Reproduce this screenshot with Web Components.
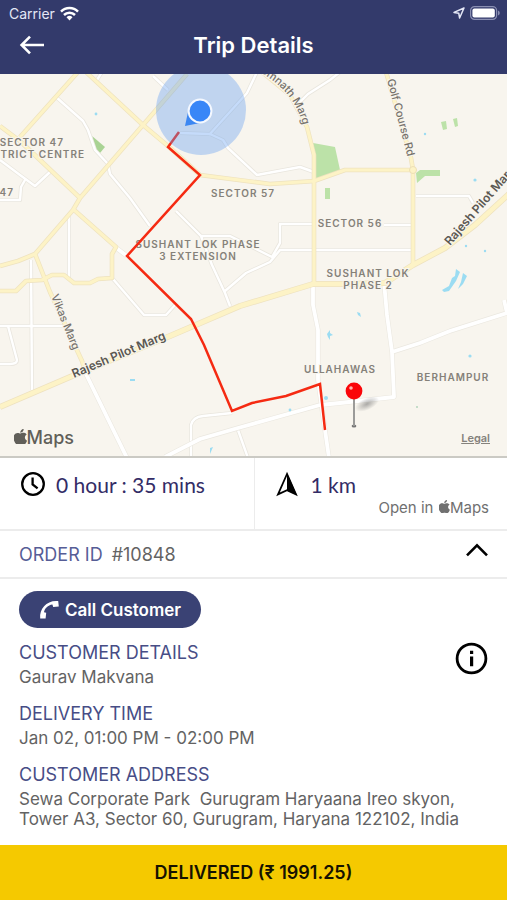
<!DOCTYPE html>
<html lang="en">
<head>
<meta charset="UTF-8">
<meta name="viewport" content="width=device-width, initial-scale=1">
<title>Trip Details</title>
<style>
    :root {
        --color-primary: #333a6b;
        --color-button: #3a4274;
        --color-heading: #474d86;
        --color-value: #332c66;
        --color-text: #636363;
        --color-line: #ececec;
        --color-accent: #f5c900;
        --gutter: 19px;
        --font-size-sm: 15px;
        --font-size-md: 17px;
        --font-size-lg: 18px;
        --font-size-xl: 22px;
        --font-display: Lato, "Open Sans", sans-serif;
    }

    body {
        margin: 0;
        background: #fff;
        color: var(--color-text);
        font-family: Inter, "Liberation Sans", sans-serif;
        font-size: var(--font-size-md);
    }
</style>
</head>
<body>
<trip-page>
    <status-bar slot="header">Carrier</status-bar>
    <nav-bar slot="header">Trip Details</nav-bar>
    <trip-map></trip-map>
    <trip-summary>
        <span slot="time">0 hour : 35 mins</span>
        <span slot="distance">1 km</span>
    </trip-summary>
    <order-row>#10848</order-row>
    <customer-panel>
        <detail-item label="CUSTOMER DETAILS">Gaurav Makvana</detail-item>
        <detail-item label="DELIVERY TIME">Jan 02, 01:00 PM - 02:00 PM</detail-item>
        <detail-item label="CUSTOMER ADDRESS">Sewa Corporate Park&nbsp; Gurugram Haryaana Ireo skyon, Tower A3, Sector 60, Gurugram, Haryana 122102, India</detail-item>
    </customer-panel>
    <deliver-button slot="footer">DELIVERED (₹ 1991.25)</deliver-button>
</trip-page>

<script>
class TripPage extends HTMLElement {
    connectedCallback() {
        const shadow = this.attachShadow({ mode: "open" });
        shadow.innerHTML = `
            <style>
                :host {
                    display: flex;
                    flex-direction: column;
                    min-height: 100vh;
                }

                header {
                    background: var(--color-primary);
                    color: #fff;
                }

                main {
                    display: flex;
                    flex-direction: column;
                    flex: 1;
                }
            </style>

            <header><slot name="header"></slot></header>
            <main><slot></slot></main>
            <footer><slot name="footer"></slot></footer>
        `;
    }
}

class StatusBar extends HTMLElement {
    connectedCallback() {
        const shadow = this.attachShadow({ mode: "open" });
        shadow.innerHTML = `
            <style>
                :host {
                    display: flex;
                    align-items: center;
                    justify-content: space-between;
                    height: 26px;
                    padding: 0 7px 0 9px;
                    font-size: 14px;
                    color: #e4e7f6;
                }

                .group {
                    display: flex;
                    align-items: center;
                    gap: 5px;
                }

                svg {
                    display: block;
                }
            </style>

            <div class="group">
                <span><slot></slot></span>
                <svg width="19" height="15" viewBox="0 0 19 15" fill="none" stroke="#fff" stroke-width="2.5">
                    <path d="M1 5.6a12 12 0 0 1 17 0"/>
                    <path d="M4 9a7.8 7.8 0 0 1 11 0"/>
                    <path d="M9.5 14.4 6.5 11.2a4.3 4.3 0 0 1 6 0z" fill="#fff" stroke="none"/>
                </svg>
            </div>
            <div class="group">
                <svg width="12" height="12" viewBox="0 0 12 12" fill="none" stroke="#e4e7f6" stroke-width="1.5" stroke-linejoin="round">
                    <path d="M11 1 1 5.4l4.8.9.8 4.7z"/>
                </svg>
                <svg width="30" height="14" viewBox="0 0 30 14">
                    <rect x=".6" y=".6" width="26" height="12.8" rx="4" fill="none" stroke="#8a8fb2" stroke-width="1.2"/>
                    <rect x="2.4" y="2.4" width="22.4" height="9.2" rx="2" fill="#fff"/>
                    <path d="M28 4.6q1.8.8 1.8 2.4T28 9.4z" fill="#8a8fb2"/>
                </svg>
            </div>
        `;
    }
}

class NavBar extends HTMLElement {
    connectedCallback() {
        const shadow = this.attachShadow({ mode: "open" });
        shadow.innerHTML = `
            <style>
                :host {
                    display: grid;
                    grid-template-columns: 48px 1fr 48px;
                    align-items: center;
                    height: 48px;
                }

                button {
                    display: flex;
                    align-items: center;
                    height: 38px;
                    margin-bottom: 10px;
                    padding: 0 0 0 19px;
                    border: 0;
                    background: none;
                    cursor: pointer;
                }

                h1 {
                    margin: 0 0 10px;
                    font-size: var(--font-size-xl);
                    line-height: 38px;
                    font-weight: 600;
                    text-align: center;
                }
            </style>

            <button type="button" aria-label="Back">
                <svg width="26" height="20" viewBox="0 0 26 20" fill="none" stroke="#fff" stroke-width="2.6">
                    <path d="M25 10H3M11 1.6 2.6 10l8.4 8.4"/>
                </svg>
            </button>
            <h1><slot></slot></h1>
        `;
    }
}

class AppleMark extends HTMLElement {
    connectedCallback() {
        const shadow = this.attachShadow({ mode: "open" });
        shadow.innerHTML = `
            <style>
                :host {
                    display: inline-flex;
                    align-items: baseline;
                }

                svg {
                    flex: none;
                    width: 0.7em;
                    height: 0.85em;
                }
            </style>

            <svg viewBox="3 0 18 23" preserveAspectRatio="none" fill="currentColor" aria-label="Apple">
                <path d="M12.152 6.896c-.948 0-2.415-1.078-3.96-1.04-2.04.027-3.91 1.183-4.961 3.014-2.117 3.675-.546 9.103 1.519 12.09 1.013 1.454 2.208 3.09 3.792 3.039 1.52-.065 2.09-.987 3.935-.987 1.831 0 2.35.987 3.96.948 1.637-.026 2.676-1.48 3.676-2.948 1.156-1.688 1.636-3.325 1.662-3.415-.039-.013-3.182-1.221-3.22-4.857-.026-3.04 2.48-4.494 2.597-4.559-1.429-2.09-3.623-2.324-4.39-2.376-2-.156-3.675 1.09-4.61 1.09zM15.53 3.83c.843-1.012 1.4-2.427 1.245-3.83-1.207.052-2.662.805-3.532 1.818-.78.896-1.454 2.338-1.273 3.714 1.338.104 2.715-.688 3.559-1.701"/>
            </svg>
            <span>Maps</span>
        `;
    }
}

const MINOR_ROADS = `
    M56 97 83 121 88 130 95 150 108 164 110 174 130 198 150 226
    M176 211 201 236 212 265 225 293 230 306
    M201 236H230L272 257 280 243V224H314
    M225 291 246 273 270 262 280 250H413
    M384 225H412
    M416 196H469L473 203
    M257 72 247 93 209 135
    M180 133 210 134 223 140 228 148 257 175 300 167 314 172
    M300 102 308 94 330 80 340 72
    M0 160 20 175 35 186 50 172
    M0 200H20L21 187 25 180
    M69 213V280
    M31 260 32 390
    M0 326H65
    M8 326 17 360Q17 364 10 364H0
    M97 80 102 72
    M153 76 168 90
    M113 279 144 315H166L175 305
    M191 458V425Q193 417 203 416L232 413
    M238 430 248 458`;

const WHITE_ROADS = `
    M115 247 127 256
    M86 374 127 458
    M313 284V305L318 330V380L325 430 329 458
    M384 282 387 315 392 352 394 397 340 403 320 405 238 428 200 439 165 457
    M392 352 420 343 450 331 507 313 504 300`;

const YELLOW_ROADS = `
    M78 72 20 137
    M0 126 20 141 79 197
    M73 209 116 247 112 254V278L98 279 90 283H74L64 275H52L42 280 26 281 16 291H0
    M86 72 143 125 168 146 200 175 270 184 315 181
    M187 74 143 125 80 198 73 210 35 254 18 261 0 266
    M35 254 50 292 82 361 86 374
    M262 72 290 95 307 127 314 155V284
    M314 181 345 170H412
    M386 72 411 158 413 170V264`;

const MAIN_ROADS = `
    M0 407 70 377 170 336 240 306 313 284 345 284 385 283 413 265 445 248 475 225 510 193`;

class TripMap extends HTMLElement {
    connectedCallback() {
        const shadow = this.attachShadow({ mode: "open" });
        shadow.innerHTML = `
            <style>
                :host {
                    display: flex;
                    flex: 1;
                    position: relative;
                    background: #f8f5ee;
                    border-bottom: 2px solid #cbcac4;
                }

                .map {
                    display: block;
                    width: 100%;
                    flex: 1;
                }

                .road {
                    fill: none;
                    stroke-linejoin: round;
                }

                .area {
                    font-size: 10px;
                    font-weight: 600;
                    letter-spacing: 1px;
                    text-anchor: middle;
                    fill: #858179;
                    stroke: #f8f5ee;
                    stroke-width: 2px;
                    paint-order: stroke;
                }

                .area__edge {
                    text-anchor: end;
                }

                .street {
                    font-size: 11px;
                    font-weight: 500;
                    fill: #77736c;
                    stroke: #f8f5ee;
                    stroke-width: 2px;
                    paint-order: stroke;
                }

                .street--main {
                    font-size: 12px;
                    font-weight: 600;
                    fill: #5b5852;
                }

                .brand {
                    position: absolute;
                    left: 14px;
                    bottom: 8px;
                    font-size: var(--font-size-lg);
                    font-weight: 500;
                    color: #615f59;
                }

                .legal {
                    position: absolute;
                    right: 17px;
                    bottom: 11px;
                    font-size: 11px;
                    font-weight: 600;
                    color: #85827c;
                }
            </style>

            <svg class="map" viewBox="0 74 507 382" preserveAspectRatio="xMidYMid slice" role="img" aria-label="Route map">
                <defs>
                    <path id="somnath" d="M254 69Q298 91 304 132"/>
                    <radialGradient id="shade">
                        <stop offset="0" stop-color="#777" stop-opacity=".6"/>
                        <stop offset="1" stop-color="#777" stop-opacity="0"/>
                    </radialGradient>
                </defs>

                <!-- parks -->
                <g fill="#bce2a8">
                    <path d="M313 143 335 147 340 170 316 179z"/>
                    <path d="M92 136 105 147 100 153 96 150z" fill="#a9d394"/>
                    <path d="M325 188h5v11h-5z"/>
                    <path d="M416 173 420 170H440V176H425L417 183z"/>
                    <path d="M441 122 446 121 447 129 443 130zM453 119 457 118 458 126 455 127z"/>
                </g>

                <!-- roads -->
                <path class="road" stroke="#e9e6de" stroke-width="4" d="${MINOR_ROADS}"/>
                <path class="road" stroke="#fff" stroke-width="2.4" d="${MINOR_ROADS}"/>
                <path class="road" stroke="#ebe8e0" stroke-width="5" d="${WHITE_ROADS}"/>
                <path class="road" stroke="#fff" stroke-width="3.8" d="${WHITE_ROADS}"/>
                <path class="road" stroke="#eee2bf" stroke-width="4.6" d="${YELLOW_ROADS}"/>
                <path class="road" stroke="#eee2bf" stroke-width="6" d="${MAIN_ROADS}"/>
                <path class="road" stroke="#fdf3c6" stroke-width="3.2" d="${YELLOW_ROADS}"/>
                <path class="road" stroke="#fdf3c6" stroke-width="4.6" d="${MAIN_ROADS}"/>
                <circle cx="413" cy="170" r="3.5" fill="#fdf3c6" stroke="#eddfb5"/>

                <!-- water -->
                <g fill="#9bdcf2">
                    <path d="M456 269 460 272 456 281 449 291 444 292 442 290 449 286 452 278 455 276zM463 273 467 276 463 284 458 289 461 282z"/>
                    <path d="M327 334 330 330 330 333 333 335 330 336 330 340 328 337z"/>
                    <path d="M357 312 360 313 361 317 358 315zM210 448 213 447 210 454zM130 379h5v2h-5z"/>
                    <circle cx="96" cy="114" r="1.4"/>
                    <circle cx="425" cy="134" r="1.2"/>
                    <circle cx="475" cy="180" r="1.6"/>
                    <circle cx="466" cy="246" r="1.2"/>
                    <circle cx="485" cy="251" r="1.2"/>
                    <circle cx="470" cy="356" r="1.6"/>
                    <circle cx="326" cy="398" r="2"/>
                    <circle cx="290" cy="410" r="1.4"/>
                    <circle cx="417" cy="407" r="1" fill="#b5d5bd"/>
                </g>

                <g class="area">
                    <text class="area__edge" x="64" y="146">SECTOR 47</text>
                    <text class="area__edge" x="85" y="158">DISTRICT CENTRE</text>
                    <text class="area__edge" x="14" y="196">SECTOR 47</text>
                    <text x="243" y="197">SECTOR 57</text>
                    <text x="350" y="227">SECTOR 56</text>
                    <text x="198" y="248">SUSHANT LOK PHASE</text>
                    <text x="198" y="260">3 EXTENSION</text>
                    <text x="368" y="277">SUSHANT LOK</text>
                    <text x="368" y="289">PHASE 2</text>
                    <text x="340" y="373">ULLAHAWAS</text>
                    <text x="453" y="381">BERHAMPUR</text>
                </g>
                <g class="street">
                    <text><textPath href="#somnath">Somnath Marg</textPath></text>
                    <text transform="translate(387 80) rotate(75)">Golf Course Rd</text>
                    <text transform="translate(51 296) rotate(68)">Vikas Marg</text>
                    <text class="street--main" transform="translate(74 378) rotate(-23)">Rajesh Pilot Marg</text>
                    <text class="street--main" transform="translate(450 246) rotate(-49)">Rajesh Pilot Marg</text>
                </g>

                <!-- route -->
                <path d="M179 132 168 147 200 175 127 256 191 319 204 345 232 411 252 403 286 396 320 384 325 430" fill="none" stroke="#f52a12" stroke-width="2.5"/>

                <!-- current position -->
                <circle cx="201" cy="110" r="45" fill="#5e9cf0" fill-opacity=".36"/>
                <path d="M185 126 188 112 200 123z" fill="#3c87f2"/>
                <circle cx="200" cy="111" r="11.4" fill="#3886f7" stroke="#f4f8ff" stroke-width="2"/>

                <!-- destination -->
                <ellipse cx="367" cy="404" rx="13" ry="6" fill="url(#shade)" transform="rotate(-25 367 404)"/>
                <ellipse cx="354" cy="426" rx="2.4" ry="1.6" fill="#777"/>
                <path d="M354 398V426" stroke="#9b9b99" stroke-width="2"/>
                <circle cx="354" cy="391" r="8.4" fill="#fa0509"/>
                <circle cx="351" cy="388" r="1.8" fill="#ffb5b0"/>
            </svg>
            <apple-mark class="brand"></apple-mark>
            <a class="legal" href="#legal">Legal</a>
        `;
    }
}

class TripSummary extends HTMLElement {
    connectedCallback() {
        const shadow = this.attachShadow({ mode: "open" });
        shadow.innerHTML = `
            <style>
                :host {
                    display: grid;
                    grid-template-columns: 1fr 1fr;
                    border-bottom: 2px solid var(--color-line);
                }

                .cell {
                    padding: 12px 18px 11px var(--gutter);
                }

                .cell + .cell {
                    border-left: 1px solid var(--color-line);
                }

                .value {
                    display: flex;
                    align-items: center;
                    gap: 10px;
                    height: 28px;
                    font-family: var(--font-display);
                    font-size: 21px;
                    color: var(--color-value);
                }

                a {
                    display: flex;
                    justify-content: flex-end;
                    gap: 6px;
                    font-size: var(--font-size-sm);
                    line-height: 20px;
                    color: #707070;
                    text-decoration: none;
                }
            </style>

            <div class="cell">
                <div class="value">
                    <svg width="27" height="27" viewBox="0 0 27 27" fill="none" stroke="#000" stroke-width="2.3">
                        <circle cx="14" cy="13" r="10.8"/>
                        <path d="M13.6 6.4V13.4L18.6 17.4"/>
                    </svg>
                    <slot name="time"></slot>
                </div>
            </div>
            <div class="cell">
                <div class="value">
                    <svg width="27" height="27" viewBox="0 0 27 27">
                        <path d="M13 3 4 23.4 13 19.2 22 23.4z" fill="none" stroke="#000" stroke-width="1.8"/>
                        <path d="M13 2 22.8 24 13 19.6z"/>
                    </svg>
                    <slot name="distance"></slot>
                </div>
                <a href="#maps">Open in <apple-mark></apple-mark></a>
            </div>
        `;
    }
}

class OrderRow extends HTMLElement {
    connectedCallback() {
        const shadow = this.attachShadow({ mode: "open" });
        shadow.innerHTML = `
            <style>
                :host {
                    display: flex;
                    align-items: center;
                    justify-content: space-between;
                    height: 46px;
                    padding: 0 var(--gutter);
                    border-bottom: 2px solid var(--color-line);
                    font-size: var(--font-size-lg);
                }

                .order {
                    display: flex;
                    gap: 9px;
                }

                .label {
                    color: #565d96;
                }

                button {
                    display: flex;
                    padding: 0 0 8px;
                    border: 0;
                    background: none;
                    cursor: pointer;
                }
            </style>

            <div class="order">
                <span class="label">ORDER ID</span>
                <span><slot></slot></span>
            </div>
            <button type="button" aria-label="Collapse order" aria-expanded="true">
                <svg width="22" height="14" viewBox="0 0 22 14" fill="none" stroke="#000" stroke-width="2.6">
                    <path d="M1 12.4 11 2.4l10 10"/>
                </svg>
            </button>
        `;
    }
}

class DetailItem extends HTMLElement {
    connectedCallback() {
        const shadow = this.attachShadow({ mode: "open" });
        shadow.innerHTML = `
            <style>
                :host {
                    display: block;
                }

                h2 {
                    margin: 0 0 3px;
                    font-size: var(--font-size-lg);
                    line-height: 22px;
                    font-weight: 400;
                    color: var(--color-heading);
                }

                p {
                    margin: 0;
                    line-height: 20px;
                }
            </style>

            <h2>${this.getAttribute("label")}</h2>
            <p><slot></slot></p>
        `;
    }
}

class CustomerPanel extends HTMLElement {
    connectedCallback() {
        const shadow = this.attachShadow({ mode: "open" });
        shadow.innerHTML = `
            <style>
                :host {
                    display: flex;
                    align-items: flex-start;
                    justify-content: space-between;
                    padding: 12px var(--gutter) 16px;
                }

                .details {
                    display: flex;
                    flex-direction: column;
                    align-items: flex-start;
                    gap: 16px;
                }

                .call {
                    display: flex;
                    align-items: center;
                    gap: 5px;
                    height: 37px;
                    padding: 0 20px;
                    margin-bottom: -2px;
                    border: 0;
                    border-radius: 19px;
                    background: var(--color-button);
                    color: #fff;
                    font: 600 17px Inter, sans-serif;
                    cursor: pointer;
                }

                .info {
                    display: flex;
                    margin: 51px 0 0 -16px;
                    padding: 0;
                    border: 0;
                    background: none;
                    cursor: pointer;
                }
            </style>

            <div class="details">
                <button class="call" type="button">
                    <svg width="21" height="21" viewBox="0 0 21 21" fill="#fff">
                        <path d="M1.2 19.4C.2 9.4 8.2.8 19.2 2L19.8 7.4 14.2 8 13.4 5.4C9 6 5.6 9.4 5 13.2L7.2 13.8 6.6 19.6z"/>
                    </svg>
                    Call Customer
                </button>
                <slot></slot>
            </div>
            <button class="info" type="button" aria-label="Order information">
                <svg width="33" height="33" viewBox="0 0 33 33">
                    <circle cx="16.5" cy="16.5" r="14.4" fill="none" stroke="#000" stroke-width="2.8"/>
                    <path d="M15 8.8h3.2V12H15zM15 14.4h3.2v9.8H15z"/>
                </svg>
            </button>
        `;
    }
}

class DeliverButton extends HTMLElement {
    connectedCallback() {
        const shadow = this.attachShadow({ mode: "open" });
        shadow.innerHTML = `
            <style>
                :host {
                    display: block;
                }

                button {
                    display: block;
                    width: 100%;
                    height: 55px;
                    border: 0;
                    background: var(--color-accent);
                    color: #161200;
                    font: 600 18px Inter, sans-serif;
                    cursor: pointer;
                }
            </style>

            <button type="button"><slot></slot></button>
        `;
    }
}

customElements.define("apple-mark", AppleMark);
customElements.define("trip-page", TripPage);
customElements.define("status-bar", StatusBar);
customElements.define("nav-bar", NavBar);
customElements.define("trip-map", TripMap);
customElements.define("trip-summary", TripSummary);
customElements.define("order-row", OrderRow);
customElements.define("detail-item", DetailItem);
customElements.define("customer-panel", CustomerPanel);
customElements.define("deliver-button", DeliverButton);
</script>
</body>
</html>
